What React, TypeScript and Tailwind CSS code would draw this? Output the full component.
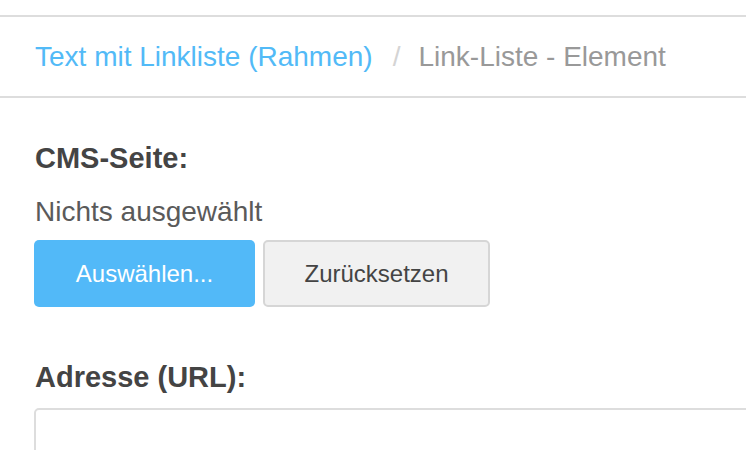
export default function App() {
  return (
    <div className="min-h-screen bg-white overflow-hidden" style={{ fontFamily: '"Liberation Sans", Arial, sans-serif' }}>
      <div className="h-[15px]" />
      <nav className="h-[83px] border-y-2 border-[#dddddd] flex items-center px-[35px] text-[28px] leading-[40px]">
        <a href="#" className="text-[#52baf7]">Text mit Linkliste (Rahmen)</a>
        <span className="text-[#d4d4d4] ml-[20px] mr-[18px]">/</span>
        <span className="text-[#999999]">Link-Liste - Element</span>
      </nav>

      <div className="pl-[34px] pt-[40px]">
        <div className="pl-px">
          <label className="block font-bold text-[29px] leading-[40px] text-[#444444]">CMS-Seite:</label>
          <p className="mt-[14px] text-[28px] leading-[40px] text-[#5a5a5a]">Nichts ausgewählt</p>
        </div>
        <div className="mt-[8px] flex gap-[8px]">
          <button className="h-[67px] w-[221px] rounded-[5px] bg-[#52b9f8] text-white text-[24px]">
            Auswählen...
          </button>
          <button className="h-[67px] w-[227px] rounded-[5px] border-2 border-[#d6d6d6] bg-[#f1f1f1] text-[#444444] text-[24px]">
            Zurücksetzen
          </button>
        </div>

        <label className="block mt-[50px] pl-px font-bold text-[29px] leading-[40px] text-[#444444]">
          Adresse (URL):
        </label>
        <input
          type="text"
          className="mt-[11px] block h-[64px] w-[760px] rounded-[5px] border-2 border-[#dddddd] bg-white outline-none"
        />
      </div>
    </div>
  );
}
